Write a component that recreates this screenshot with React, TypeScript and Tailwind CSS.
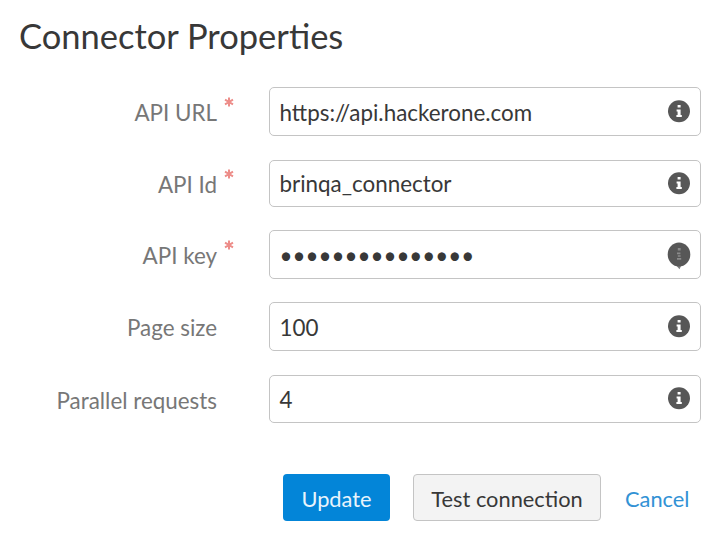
import React from "react";

type Field = { label: string; value: string; required?: boolean; secret?: boolean; row: string; text: string };

const fields: Field[] = [
  { label: "API URL", value: "https://api.hackerone.com", required: true, row: "h-[49px]", text: "pt-[3px]" },
  { label: "API Id", value: "brinqa_connector", required: true, row: "mt-[24px] h-[47px]", text: "pt-px" },
  { label: "API key", value: "•••••••••••••••", required: true, secret: true, row: "mt-[23px] h-[49px]", text: "pt-[3px]" },
  { label: "Page size", value: "100", row: "mt-[23px] h-[49px]", text: "pt-[3px]" },
  { label: "Parallel requests", value: "4", row: "mt-[24px] h-[48px]", text: "pt-[2px]" },
];

function Asterisk() {
  return (
    <svg viewBox="0 0 10 10" className="absolute top-0 left-full ml-[6.5px] h-[10px] w-[10px]" aria-label="required">
      <path d="M5 .5v9M1 2.7l8 4.6M9 2.7L1 7.3" stroke="#ed8d89" strokeWidth="2" />
    </svg>
  );
}

function Info({ secret }: { secret?: boolean }) {
  if (secret) {
    return (
      <svg width="24" height="32" viewBox="0 0 24 32" className="shrink-0">
        <path d="M7 23h10l-2.5 3-2 4.2-2.2-2.5z" fill="#7c7c7c" />
        <ellipse cx="12" cy="15.6" rx="11.3" ry="12" fill="#575757" />
        <path d="M10.8 9h2.8v2.5h-2.8zM10 13.5h3.4v1.7H10zM10.8 16.2h2.8v1.5h-2.8zM10 19h4.2v1.7H10z" fill="#8c8c8c" />
      </svg>
    );
  }
  return (
    <svg width="24" height="32" viewBox="0 0 24 32" className="shrink-0">
      <circle cx="12" cy="15.2" r="11" fill="#575757" />
      <path d="M9.6 13.4h4v5.6h1.2v2H9.4v-2h1.2v-3.6h-1zM10.6 9h3v2.6h-3z" fill="#fff" />
    </svg>
  );
}

export default function App() {
  return (
    <main className="h-[554px] w-[728px] overflow-hidden bg-white pt-[14px] font-[Lato,sans-serif] text-[#383838]">
      <h1 className="ml-[19px] h-[44px] text-[34.5px] leading-[44px]">Connector Properties</h1>
      <form className="mt-[29px] flex flex-col">
        {fields.map((f) => (
          <div key={f.label} className={`flex items-center ${f.row}`}>
            <label className="flex w-[269px] shrink-0 justify-end pt-[3px] pr-[52px] text-[22.4px] leading-[32px] text-[#777]">
              <span className="relative whitespace-nowrap">
                {f.label}
                {f.required && <Asterisk />}
              </span>
            </label>
            <div className="flex h-full w-[432px] items-center justify-between rounded-[5px] border-[1.5px] border-[#c4c4c4] pr-[9px] pl-[9.5px] text-[22.4px] leading-[32px]">
              <span className={f.text}>{f.value}</span>
              <Info secret={f.secret} />
            </div>
          </div>
        ))}
      </form>
      <div className="mt-[51px] ml-[283px] flex h-[47px] items-center text-[21.8px] leading-[32px]">
        <button type="button" className="h-[47px] w-[107px] rounded-[4px] bg-[#0385d8] pt-[3px] text-[#e9f4fc]">Update</button>
        <button type="button" className="ml-[23px] h-[47px] w-[188px] rounded-[4px] border-[1.5px] border-[#c4c4c4] bg-[#f3f3f3] pt-[3px]">Test connection</button>
        <a className="ml-[24px] pt-[3px] text-[#3292d5]">Cancel</a>
      </div>
    </main>
  );
}
